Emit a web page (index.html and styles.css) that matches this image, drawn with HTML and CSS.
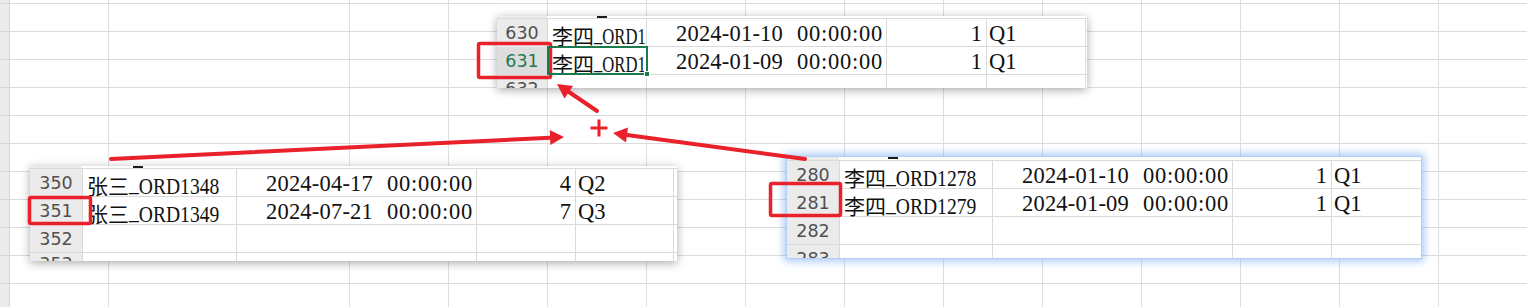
FILE: index.html
```html
<!DOCTYPE html>
<html lang="zh-CN">
<head>
<meta charset="utf-8">
<title>Sheet compare</title>
<link rel="stylesheet" href="styles.css">
</head>
<body>
<div class="sheet">
  <div class="grid">
    <div class="gcol gcol-hdr"></div>
    <div class="gcol gcol-a"></div>
    <div class="gcol gcol-b"></div>
    <div class="gcol"></div><div class="gcol"></div><div class="gcol"></div>
    <div class="gcol"></div><div class="gcol"></div><div class="gcol"></div>
    <div class="gcol"></div><div class="gcol"></div><div class="gcol"></div>
    <div class="gcol"></div><div class="gcol"></div><div class="gcol"></div>
  </div>

  <div class="shot shot-top">
    <div class="strip"><span class="dash"></span></div>
    <div class="row">
      <div class="cell c-hdr">630</div>
      <div class="cell c-name"><span class="cjk">李四</span><span class="lat"><span class="us">_</span>ORD1</span></div>
      <div class="cell c-date"><span class="d">2024-01-10</span><span class="t">00:00:00</span></div>
      <div class="cell c-num">1</div>
      <div class="cell c-q">Q1</div>
      <div class="cell c-end"></div>
    </div>
    <div class="row">
      <div class="cell c-hdr c-hdr-sel">631</div>
      <div class="cell c-name c-sel"><span class="cjk">李四</span><span class="lat"><span class="us">_</span>ORD1</span></div>
      <div class="cell c-date"><span class="d">2024-01-09</span><span class="t">00:00:00</span></div>
      <div class="cell c-num">1</div>
      <div class="cell c-q">Q1</div>
      <div class="cell c-end"></div>
    </div>
    <div class="row row-cut">
      <div class="cell c-hdr">632</div>
      <div class="cell c-name"></div>
      <div class="cell c-date"></div>
      <div class="cell c-num"></div>
      <div class="cell c-q"></div>
      <div class="cell c-end"></div>
    </div>
  </div>

  <div class="shot shot-left">
    <div class="strip"><span class="dash"></span></div>
    <div class="row">
      <div class="cell c-hdr">350</div>
      <div class="cell c-name"><span class="cjk">张三</span><span class="lat"><span class="us">_</span>ORD1348</span></div>
      <div class="cell c-date"><span class="d">2024-04-17</span><span class="t">00:00:00</span></div>
      <div class="cell c-num">4</div>
      <div class="cell c-q">Q2</div>
      <div class="cell c-end"></div>
    </div>
    <div class="row">
      <div class="cell c-hdr">351</div>
      <div class="cell c-name"><span class="cjk">张三</span><span class="lat"><span class="us">_</span>ORD1349</span></div>
      <div class="cell c-date"><span class="d">2024-07-21</span><span class="t">00:00:00</span></div>
      <div class="cell c-num">7</div>
      <div class="cell c-q">Q3</div>
      <div class="cell c-end"></div>
    </div>
    <div class="row">
      <div class="cell c-hdr">352</div>
      <div class="cell c-name"></div>
      <div class="cell c-date"></div>
      <div class="cell c-num"></div>
      <div class="cell c-q"></div>
      <div class="cell c-end"></div>
    </div>
    <div class="row row-cut">
      <div class="cell c-hdr c-hdr-cut">353</div>
      <div class="cell c-name"></div>
      <div class="cell c-date"></div>
      <div class="cell c-num"></div>
      <div class="cell c-q"></div>
      <div class="cell c-end"></div>
    </div>
  </div>

  <div class="shot shot-right">
    <div class="strip"><span class="dash"></span></div>
    <div class="row">
      <div class="cell c-hdr">280</div>
      <div class="cell c-name"><span class="cjk">李四</span><span class="lat"><span class="us">_</span>ORD1278</span></div>
      <div class="cell c-date"><span class="d">2024-01-10</span><span class="t">00:00:00</span></div>
      <div class="cell c-num">1</div>
      <div class="cell c-q">Q1</div>
    </div>
    <div class="row">
      <div class="cell c-hdr">281</div>
      <div class="cell c-name"><span class="cjk">李四</span><span class="lat"><span class="us">_</span>ORD1279</span></div>
      <div class="cell c-date"><span class="d">2024-01-09</span><span class="t">00:00:00</span></div>
      <div class="cell c-num">1</div>
      <div class="cell c-q">Q1</div>
    </div>
    <div class="row">
      <div class="cell c-hdr">282</div>
      <div class="cell c-name"></div>
      <div class="cell c-date"></div>
      <div class="cell c-num"></div>
      <div class="cell c-q"></div>
    </div>
    <div class="row row-cut">
      <div class="cell c-hdr">283</div>
      <div class="cell c-name"></div>
      <div class="cell c-date"></div>
      <div class="cell c-num"></div>
      <div class="cell c-q"></div>
    </div>
  </div>

  <svg class="marks" width="1527" height="307" viewBox="0 0 1527 307" xmlns="http://www.w3.org/2000/svg">
    <g fill="none" stroke="#e8212b" stroke-width="3.5" stroke-linejoin="round">
      <rect x="478.5" y="43.5" width="72" height="34" rx="1.5"/>
      <rect x="29.5" y="197.5" width="61" height="26" rx="1.5"/>
      <rect x="770.5" y="183.5" width="70" height="32" rx="1.5"/>
    </g>
    <g stroke="#e8212b" stroke-width="4" stroke-linecap="round">
      <line x1="597" y1="111" x2="569" y2="92"/>
      <line x1="111" y1="159" x2="550" y2="137.7"/>
      <line x1="805" y1="159" x2="627" y2="135"/>
    </g>
    <g fill="#e8212b">
      <polygon points="557,84 573,86 564.5,98.5"/>
      <polygon points="564,137 549.7,130 550.4,145"/>
      <polygon points="613,133 628,127.5 626,142.5"/>
    </g>
    <g stroke="#e8212b" stroke-width="3">
      <line x1="590.5" y1="128" x2="607.5" y2="128"/>
      <line x1="599" y1="119.5" x2="599" y2="136.5"/>
    </g>
  </svg>
</div>
</body>
</html>
```

FILE: styles.css
```css
html, body {
  margin: 0;
  padding: 0;
  background: #ffffff;
}

.sheet {
  position: relative;
  width: 1527px;
  height: 307px;
  overflow: hidden;
  background: #ffffff;
}

/* background spreadsheet grid */
.grid {
  display: flex;
  height: 100%;
  background-image: linear-gradient(to bottom, #dcdcdc 1px, transparent 1px);
  background-size: 100% 28px;
  background-position: 0 3px;
}

.gcol {
  flex: none;
  width: 99px;
  height: 100%;
  box-sizing: border-box;
  border-right: 1px solid #dedede;
}

.gcol-hdr {
  width: 10px;
  background-color: #ebebeb;
  background-image: linear-gradient(to bottom, #d6d6d6 1px, transparent 1px);
  background-size: 100% 28px;
  background-position: 0 3px;
  border-right: 1px solid #d4d4d4;
}

.gcol-a { width: 99px; }
.gcol-b { width: 241px; }

/* pasted screenshots */
.shot {
  position: absolute;
  background: #ffffff;
  overflow: hidden;
  box-shadow: 0 2px 9px rgba(0, 0, 0, 0.34);
}

.shot-top {
  left: 497px;
  top: 16px;
  width: 590px;
}

.shot-left {
  left: 30px;
  top: 166px;
  width: 647px;
}

.shot-right {
  left: 787px;
  top: 157px;
  width: 634px;
  box-shadow: 0 0 0 1px #b3cff6, 0 0 8px 3px rgba(104, 160, 238, 0.6);
}

.strip {
  height: 3px;
  box-sizing: border-box;
  border-bottom: 1px solid #dadada;
}

.shot-right .strip { height: 4px; }

.shot-top .strip { background: linear-gradient(to right, #ebebeb 50px, #ffffff 50px); }
.shot-left .strip,
.shot-right .strip { background: linear-gradient(to right, #ebebeb 52px, #ffffff 52px); }

.dash {
  display: block;
  width: 10px;
  height: 2px;
  background: #1a1a1a;
}

.shot-top .dash { margin-left: 100px; }
.shot-left .dash { margin-left: 103px; }
.shot-right .dash { margin-left: 101px; }

.row {
  display: grid;
  height: 28px;
  box-sizing: border-box;
  border-bottom: 1px solid #dadada;
}

.row-cut {
  border-bottom: none;
}

.shot-top .row { grid-template-columns: 51px 99px 240px 100px 99px 1px; }
.shot-top .row-cut { height: 13px; }

.shot-left .row { grid-template-columns: 53px 154px 240px 99px 98px 3px; }
.shot-left .row-cut { height: 8px; }

.shot-right .row { grid-template-columns: 53px 153px 240px 99px 89px; }
.shot-right .row-cut { height: 13px; }

.cell {
  box-sizing: border-box;
  border-right: 1px solid #dadada;
  white-space: nowrap;
  font-family: "Liberation Serif", "Noto Sans CJK SC", serif;
  font-size: 22.5px;
  line-height: 24px;
  padding-top: 3px;
  color: #111111;
}

.shot-right .c-q { border-right: none; }

.c-end { border-right: none; }

.c-hdr {
  background: #ebebeb;
  text-align: center;
  font-family: "DejaVu Sans", sans-serif;
  font-size: 17.5px;
  line-height: 22px;
  padding-top: 3px;
  color: #505050;
  border-right: 1px solid #d8d8d8;
}

.c-hdr-cut {
  padding-top: 0;
}

.c-hdr-sel {
  background: #dddddd;
  color: #1f7a4b;
}

.c-name {
  padding-left: 4px;
}

.cjk {
  font-family: "Noto Sans CJK SC", sans-serif;
  font-size: 21px;
  color: #111111;
}

.lat {
  display: inline-block;
  transform: scaleX(0.87);
  transform-origin: 0 50%;
}

.shot-top .lat {
  transform: scaleX(0.74);
}

.us {
  vertical-align: 3px;
}

.c-sel {
  position: relative;
}

.c-sel::after {
  content: "";
  position: absolute;
  left: -1px;
  top: -1px;
  width: 101px;
  height: 29px;
  box-sizing: border-box;
  border: 2px solid #1d7a4c;
  z-index: 2;
}

.c-sel::before {
  content: "";
  position: absolute;
  left: 96px;
  top: 24px;
  width: 6px;
  height: 6px;
  box-sizing: border-box;
  background: #1d7a4c;
  border: 1px solid #ffffff;
  z-index: 3;
}

.c-date {
  padding-left: 29px;
}

.c-date .d {
  display: inline-block;
  width: 121px;
  letter-spacing: 0.2px;
}

.c-date .t {
  letter-spacing: 0.75px;
}

.c-num {
  text-align: right;
  padding-right: 4px;
}

.c-q {
  padding-left: 2px;
}

.marks {
  position: absolute;
  left: 0;
  top: 0;
  pointer-events: none;
}
```
